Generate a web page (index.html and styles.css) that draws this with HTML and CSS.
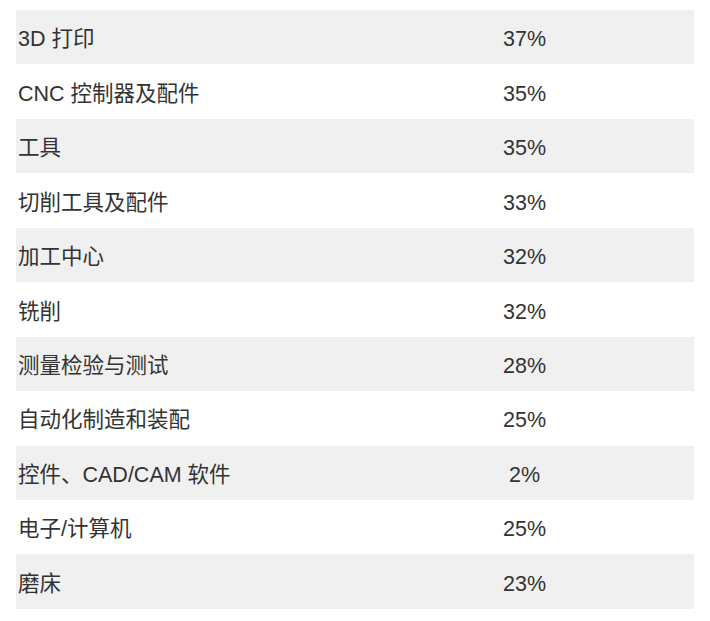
FILE: index.html
```html
<!DOCTYPE html>
<html lang="zh">
<head>
<meta charset="utf-8">
<link rel="stylesheet" href="styles.css">
</head>
<body>
<table class="data">
<tbody>
<tr><td class="name">3D 打印</td><td class="pct">37%</td></tr>
<tr><td class="name">CNC 控制器及配件</td><td class="pct">35%</td></tr>
<tr><td class="name">工具</td><td class="pct">35%</td></tr>
<tr><td class="name">切削工具及配件</td><td class="pct">33%</td></tr>
<tr><td class="name">加工中心</td><td class="pct">32%</td></tr>
<tr><td class="name">铣削</td><td class="pct">32%</td></tr>
<tr><td class="name">测量检验与测试</td><td class="pct">28%</td></tr>
<tr><td class="name">自动化制造和装配</td><td class="pct">25%</td></tr>
<tr><td class="name">控件、CAD/CAM 软件</td><td class="pct">2%</td></tr>
<tr><td class="name">电子/计算机</td><td class="pct">25%</td></tr>
<tr><td class="name">磨床</td><td class="pct">23%</td></tr>
</tbody>
</table>
</body>
</html>
```
FILE: styles.css
```css
html, body {
  margin: 0;
  padding: 0;
  background: #ffffff;
}
body {
  padding: 10px 16px 0 16px;
  font-family: "Liberation Sans", "Noto Sans CJK SC", sans-serif;
  color: #333333;
}
.data {
  width: 678px;
  border-collapse: collapse;
  table-layout: fixed;
}
.data tr {
  height: 54.45px;
}
.data tr:nth-child(odd) {
  background: #f0f0f0;
}
.data td {
  padding: 6px 0 0 0;
  font-size: 21.5px;
  line-height: 1.2;
  vertical-align: middle;
}
.name {
  padding-left: 2px !important;
  text-align: left;
}
.pct {
  text-align: center;
}
```
